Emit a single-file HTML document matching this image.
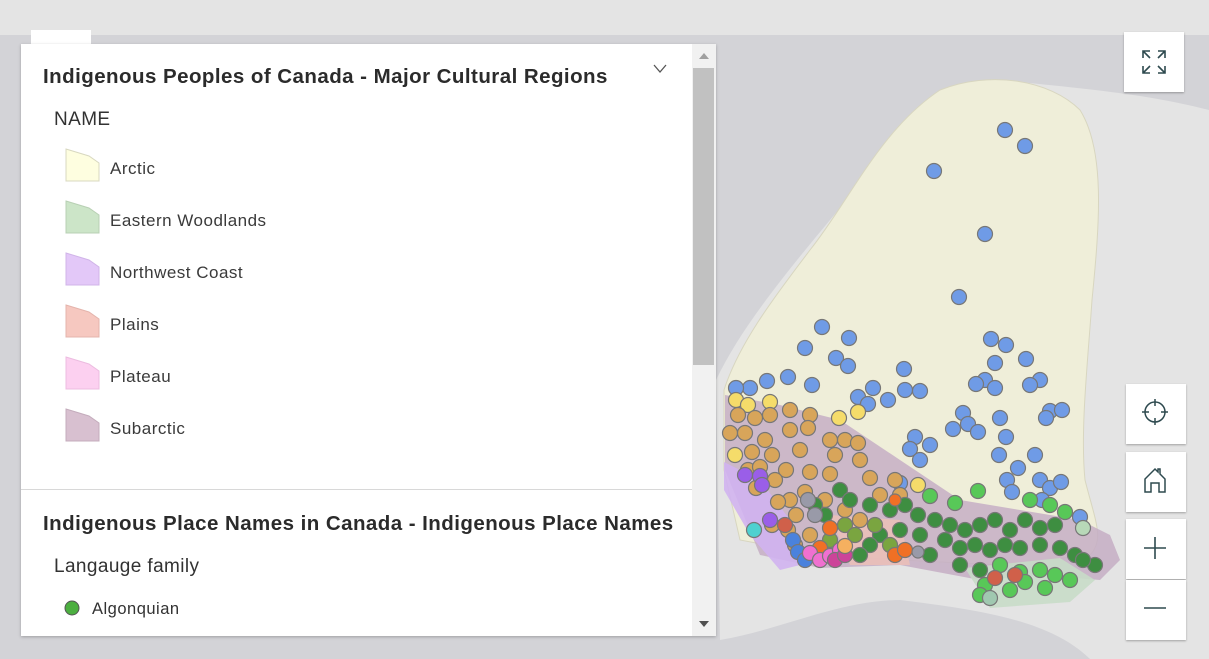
<!DOCTYPE html>
<html><head><meta charset="utf-8"><style>
body{margin:0;width:1209px;height:659px;overflow:hidden;background:#d3d3d7;font-family:"Liberation Sans",sans-serif;position:relative}
.top{position:absolute;left:0;top:0;width:1209px;height:35px;background:#e4e4e4}
.tab{position:absolute;left:31px;top:30px;width:60px;height:16px;background:#fff}
.panel{position:absolute;left:21px;top:44px;width:695px;height:592px;background:#fff;box-shadow:0 1px 3px rgba(0,0,0,.25);overflow:hidden}
h2{position:absolute;margin:0;font-size:20.5px;font-weight:bold;color:#2b2b2b;left:22px;letter-spacing:0.45px;white-space:nowrap}
.lbl{position:absolute;font-size:19px;color:#323232;left:33px;letter-spacing:0.4px}
.it{position:absolute;left:44px;height:34px}
.it span{position:absolute;left:45px;top:11px;font-size:17px;color:#3a3a3a;white-space:nowrap;letter-spacing:0.5px}
.sb{position:absolute;left:671px;top:0;width:24px;height:592px;background:#f1f1f1}
.btn{position:absolute;width:60px;height:60px;background:#fff;box-shadow:0 1px 2px rgba(0,0,0,.3)}
</style></head><body>
<svg style="position:absolute;left:0;top:0" width="1209" height="659">
<rect x="0" y="35" width="1209" height="624" fill="#d3d3d7"/>
<path d="M716 380 C740 330 780 280 830 220 C880 160 930 90 1000 80 C1100 90 1150 95 1209 110 L1209 659 L1090 659 C1050 620 980 610 900 600 C840 600 780 630 720 640Z" fill="#e4e4e4"/>
<path d="M724 390 C740 340 780 290 810 250 C850 200 880 130 940 90 C990 70 1050 80 1080 110 C1105 150 1100 220 1092 300 C1088 360 1080 430 1085 480 C1095 520 1105 540 1090 555 L1000 565 L900 560 L820 555 L740 540 L724 470Z" fill="#efeed9" stroke="#d8d6c0"/>
<path d="M725 395 L780 405 840 420 900 460 960 500 1020 510 1080 520 1110 535 1120 560 1100 580 1040 575 980 580 900 565 820 568 760 555 725 470Z" fill="#c6aec4" opacity=".85"/>
<path d="M724 462 L760 480 790 520 800 565 780 570 750 535 724 490Z" fill="#d0b3f0" opacity=".9"/>
<path d="M830 515 L900 520 910 565 850 565Z" fill="#eec0b6" opacity=".8"/>
<path d="M965 568 L1060 558 1095 580 1070 602 990 608Z" fill="#c8dbc8" opacity=".9"/>
<g stroke="#777" stroke-width="1.2">
<g fill="#6f9be6">
<circle cx="1005" cy="130" r="7.5"/><circle cx="1025" cy="146" r="7.5"/><circle cx="934" cy="171" r="7.5"/><circle cx="985" cy="234" r="7.5"/><circle cx="959" cy="297" r="7.5"/><circle cx="822" cy="327" r="7.5"/><circle cx="849" cy="338" r="7.5"/><circle cx="805" cy="348" r="7.5"/><circle cx="836" cy="358" r="7.5"/><circle cx="848" cy="366" r="7.5"/><circle cx="904" cy="369" r="7.5"/><circle cx="991" cy="339" r="7.5"/><circle cx="1006" cy="345" r="7.5"/><circle cx="995" cy="363" r="7.5"/><circle cx="1026" cy="359" r="7.5"/><circle cx="1040" cy="380" r="7.5"/><circle cx="1030" cy="385" r="7.5"/><circle cx="985" cy="380" r="7.5"/><circle cx="976" cy="384" r="7.5"/><circle cx="995" cy="388" r="7.5"/><circle cx="788" cy="377" r="7.5"/><circle cx="812" cy="385" r="7.5"/><circle cx="767" cy="381" r="7.5"/><circle cx="750" cy="388" r="7.5"/><circle cx="736" cy="388" r="7.5"/><circle cx="873" cy="388" r="7.5"/><circle cx="858" cy="397" r="7.5"/><circle cx="868" cy="404" r="7.5"/><circle cx="888" cy="400" r="7.5"/><circle cx="905" cy="390" r="7.5"/><circle cx="920" cy="391" r="7.5"/><circle cx="963" cy="413" r="7.5"/><circle cx="968" cy="424" r="7.5"/><circle cx="953" cy="429" r="7.5"/><circle cx="978" cy="432" r="7.5"/><circle cx="1000" cy="418" r="7.5"/><circle cx="1050" cy="411" r="7.5"/><circle cx="1062" cy="410" r="7.5"/><circle cx="1046" cy="418" r="7.5"/><circle cx="915" cy="437" r="7.5"/><circle cx="930" cy="445" r="7.5"/><circle cx="910" cy="449" r="7.5"/><circle cx="920" cy="460" r="7.5"/><circle cx="1006" cy="437" r="7.5"/><circle cx="999" cy="455" r="7.5"/><circle cx="1035" cy="455" r="7.5"/><circle cx="1018" cy="468" r="7.5"/><circle cx="1040" cy="480" r="7.5"/><circle cx="1050" cy="488" r="7.5"/><circle cx="1007" cy="480" r="7.5"/><circle cx="900" cy="483" r="7.5"/><circle cx="1012" cy="492" r="7.5"/><circle cx="1042" cy="500" r="7.5"/><circle cx="1080" cy="517" r="7.5"/><circle cx="1061" cy="482" r="7.5"/>
</g>
<g fill="#f5dc6a"><circle cx="736" cy="400" r="7.5"/><circle cx="748" cy="405" r="7.5"/><circle cx="770" cy="402" r="7.5"/><circle cx="839" cy="418" r="7.5"/><circle cx="858" cy="412" r="7.5"/><circle cx="735" cy="455" r="7.5"/><circle cx="918" cy="485" r="7.5"/></g>
<g fill="#d8a55a">
<circle cx="738" cy="415" r="7.5"/><circle cx="755" cy="418" r="7.5"/><circle cx="770" cy="415" r="7.5"/><circle cx="790" cy="410" r="7.5"/><circle cx="810" cy="415" r="7.5"/><circle cx="730" cy="433" r="7.5"/><circle cx="745" cy="433" r="7.5"/><circle cx="765" cy="440" r="7.5"/><circle cx="790" cy="430" r="7.5"/><circle cx="808" cy="428" r="7.5"/><circle cx="830" cy="440" r="7.5"/><circle cx="845" cy="440" r="7.5"/><circle cx="858" cy="443" r="7.5"/><circle cx="752" cy="452" r="7.5"/><circle cx="772" cy="455" r="7.5"/><circle cx="800" cy="450" r="7.5"/><circle cx="835" cy="455" r="7.5"/><circle cx="860" cy="460" r="7.5"/><circle cx="748" cy="470" r="7.5"/><circle cx="760" cy="467" r="7.5"/><circle cx="786" cy="470" r="7.5"/><circle cx="810" cy="472" r="7.5"/><circle cx="830" cy="474" r="7.5"/><circle cx="756" cy="488" r="7.5"/><circle cx="775" cy="480" r="7.5"/><circle cx="805" cy="492" r="7.5"/><circle cx="825" cy="500" r="7.5"/><circle cx="845" cy="510" r="7.5"/><circle cx="870" cy="478" r="7.5"/><circle cx="880" cy="495" r="7.5"/><circle cx="895" cy="480" r="7.5"/><circle cx="860" cy="520" r="7.5"/><circle cx="790" cy="500" r="7.5"/><circle cx="778" cy="502" r="7.5"/><circle cx="796" cy="515" r="7.5"/><circle cx="772" cy="525" r="7.5"/><circle cx="788" cy="530" r="7.5"/><circle cx="795" cy="545" r="7.5"/><circle cx="810" cy="535" r="7.5"/><circle cx="900" cy="495" r="7.5"/></g>
<g fill="#9a5ee8"><circle cx="745" cy="475" r="7.5"/><circle cx="760" cy="476" r="7.5"/><circle cx="762" cy="485" r="7.5"/><circle cx="770" cy="520" r="7.5"/></g>
<g fill="#3e8e41">
<circle cx="840" cy="490" r="7.5"/><circle cx="850" cy="500" r="7.5"/><circle cx="870" cy="505" r="7.5"/><circle cx="890" cy="510" r="7.5"/><circle cx="905" cy="505" r="7.5"/><circle cx="918" cy="515" r="7.5"/><circle cx="935" cy="520" r="7.5"/><circle cx="950" cy="525" r="7.5"/><circle cx="965" cy="530" r="7.5"/><circle cx="980" cy="525" r="7.5"/><circle cx="995" cy="520" r="7.5"/><circle cx="1010" cy="530" r="7.5"/><circle cx="1025" cy="520" r="7.5"/><circle cx="1040" cy="528" r="7.5"/><circle cx="1055" cy="525" r="7.5"/><circle cx="825" cy="515" r="7.5"/><circle cx="815" cy="505" r="7.5"/><circle cx="900" cy="530" r="7.5"/><circle cx="920" cy="535" r="7.5"/><circle cx="945" cy="540" r="7.5"/><circle cx="960" cy="548" r="7.5"/><circle cx="975" cy="545" r="7.5"/><circle cx="990" cy="550" r="7.5"/><circle cx="1005" cy="545" r="7.5"/><circle cx="1020" cy="548" r="7.5"/><circle cx="1040" cy="545" r="7.5"/><circle cx="1060" cy="548" r="7.5"/><circle cx="1075" cy="555" r="7.5"/><circle cx="1095" cy="565" r="7.5"/><circle cx="1083" cy="560" r="7.5"/><circle cx="930" cy="555" r="7.5"/><circle cx="960" cy="565" r="7.5"/><circle cx="980" cy="570" r="7.5"/><circle cx="880" cy="535" r="7.5"/><circle cx="870" cy="545" r="7.5"/><circle cx="860" cy="555" r="7.5"/></g>
<g fill="#7aa540"><circle cx="845" cy="525" r="7.5"/><circle cx="855" cy="535" r="7.5"/><circle cx="875" cy="525" r="7.5"/><circle cx="890" cy="545" r="7.5"/><circle cx="830" cy="540" r="7.5"/></g>
<g fill="#f07025"><circle cx="895" cy="555" r="7.5"/><circle cx="905" cy="550" r="7.5"/><circle cx="830" cy="528" r="7.5"/><circle cx="820" cy="548" r="7.5"/><circle cx="895" cy="500" r="6"/></g>
<g fill="#58c858"><circle cx="978" cy="491" r="7.5"/><circle cx="930" cy="496" r="7.5"/><circle cx="955" cy="503" r="7.5"/><circle cx="1030" cy="500" r="7.5"/><circle cx="1050" cy="505" r="7.5"/><circle cx="1065" cy="512" r="7.5"/><circle cx="1000" cy="565" r="7.5"/><circle cx="1020" cy="572" r="7.5"/><circle cx="1040" cy="570" r="7.5"/><circle cx="1055" cy="575" r="7.5"/><circle cx="1070" cy="580" r="7.5"/><circle cx="985" cy="585" r="7.5"/><circle cx="1010" cy="590" r="7.5"/><circle cx="1045" cy="588" r="7.5"/><circle cx="1025" cy="582" r="7.5"/><circle cx="980" cy="595" r="7.5"/></g>
<g fill="#d0604a"><circle cx="995" cy="578" r="7.5"/><circle cx="1015" cy="575" r="7.5"/><circle cx="785" cy="525" r="7.5"/></g>
<g fill="#4a82dd"><circle cx="793" cy="540" r="7.5"/><circle cx="798" cy="552" r="7.5"/><circle cx="805" cy="560" r="7.5"/></g>
<g fill="#f070d0"><circle cx="810" cy="553" r="7.5"/><circle cx="820" cy="560" r="7.5"/><circle cx="830" cy="556" r="7.5"/><circle cx="840" cy="550" r="7.5"/></g>
<g fill="#cc4499"><circle cx="835" cy="560" r="7.5"/><circle cx="845" cy="555" r="7.5"/></g>
<g fill="#999aa8"><circle cx="808" cy="500" r="7.5"/><circle cx="815" cy="515" r="7.5"/><circle cx="918" cy="552" r="6"/></g>
<circle cx="754" cy="530" r="7.5" fill="#4fd0d0"/>
<circle cx="845" cy="546" r="7.5" fill="#f5b060"/>
<circle cx="1083" cy="528" r="7.5" fill="#b8d8b8"/><circle cx="990" cy="598" r="7.5" fill="#a0c8b0"/>
</g>
</svg>
<div class="top"></div>
<div class="tab"></div>
<div class="panel">
<h2 style="top:21px">Indigenous Peoples of Canada - Major Cultural Regions</h2>
<svg style="position:absolute;left:632px;top:20px" width="14" height="10"><path d="M1 1 L7 8 L13 1" fill="none" stroke="#555" stroke-width="1.3"/></svg>
<div class="lbl" style="top:65px">NAME</div>
<div class="it" style="top:104px"><svg width="36" height="34"><path d="M1 1 L24 8 L34 15 L34 33 L1 33Z" fill="#fefee0" stroke="#d8d8c0"/></svg><span>Arctic</span></div>
<div class="it" style="top:156px"><svg width="36" height="34"><path d="M1 1 L24 8 L34 15 L34 33 L1 33Z" fill="#cce5c8" stroke="#b8d0b4"/></svg><span>Eastern Woodlands</span></div>
<div class="it" style="top:208px"><svg width="36" height="34"><path d="M1 1 L24 8 L34 15 L34 33 L1 33Z" fill="#e3c8f8" stroke="#d0b4e8"/></svg><span>Northwest Coast</span></div>
<div class="it" style="top:260px"><svg width="36" height="34"><path d="M1 1 L24 8 L34 15 L34 33 L1 33Z" fill="#f6c8c0" stroke="#e4b4ac"/></svg><span>Plains</span></div>
<div class="it" style="top:312px"><svg width="36" height="34"><path d="M1 1 L24 8 L34 15 L34 33 L1 33Z" fill="#fcd0f0" stroke="#ecbce0"/></svg><span>Plateau</span></div>
<div class="it" style="top:364px"><svg width="36" height="34"><path d="M1 1 L24 8 L34 15 L34 33 L1 33Z" fill="#d8c0d0" stroke="#c4acbc"/></svg><span>Subarctic</span></div>
<div style="position:absolute;left:0;top:445px;width:671px;height:1px;background:#d8d8d8"></div>
<h2 style="top:468px">Indigenous Place Names in Canada - Indigenous Place Names</h2>
<div class="lbl" style="top:512px">Langauge family</div>
<svg style="position:absolute;left:43px;top:556px" width="16" height="16"><circle cx="8" cy="8" r="7" fill="#4caf40" stroke="#555"/></svg>
<div style="position:absolute;left:71px;top:556px;font-size:16.5px;color:#323232;letter-spacing:0.5px">Algonquian</div>
<div class="sb"><div style="position:absolute;left:1px;top:24px;width:21px;height:297px;background:#c1c1c1"></div>
<svg style="position:absolute;left:6px;top:8px" width="12" height="8"><path d="M1 7 L6 1 L11 7Z" fill="#a0a0a0"/></svg>
<svg style="position:absolute;left:6px;top:576px" width="12" height="8"><path d="M1 1 L6 7 L11 1Z" fill="#505050"/></svg></div>
</div>
<div class="btn" style="left:1124px;top:32px"><svg width="60" height="60"><g fill="none" stroke="#2e4a4f" stroke-width="1.6"><path d="M19 26V19H26M19 19L26 26M34 19H41V26M41 19L34 26M19 34V41H26M19 41L26 34M41 34V41H34M41 41L34 34"/></g></svg></div>
<div class="btn" style="left:1126px;top:384px"><svg width="60" height="60"><g fill="none" stroke="#2e4a4f" stroke-width="1.5"><circle cx="29" cy="28" r="10"/><path d="M29 15V22M29 34V41M16 28H23M35 28H42"/></g></svg></div>
<div class="btn" style="left:1126px;top:452px"><svg width="60" height="60"><path d="M19 40V27L29 17L32 20V17H34V22L39 27V40H33V31H25V40Z" fill="none" stroke="#2e4a4f" stroke-width="1.5"/></svg></div>
<div class="btn" style="left:1126px;top:519px"><svg width="60" height="60"><path d="M18 29H40M29 18V40" stroke="#2e4a4f" stroke-width="1.6"/></svg></div>
<div class="btn" style="left:1126px;top:580px"><svg width="60" height="60"><path d="M18 28H40" stroke="#2e4a4f" stroke-width="1.6"/></svg></div>
</body></html>
